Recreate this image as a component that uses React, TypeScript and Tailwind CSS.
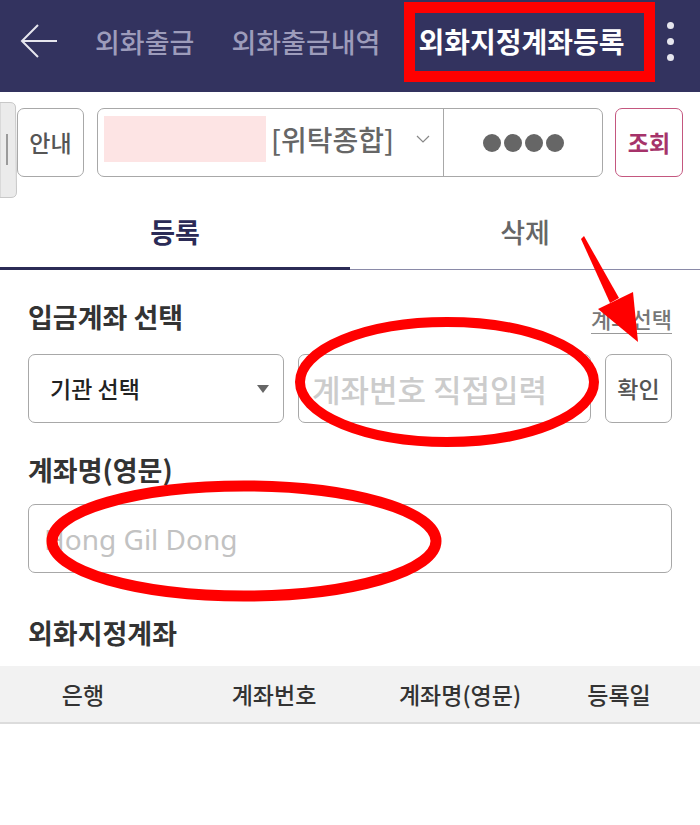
import React from "react";

const KR = { fontFamily: '"Noto Sans CJK KR", "Noto Sans", sans-serif' };

export default function App() {
  return (
    <div className="relative w-[700px] h-[825px] bg-white overflow-hidden" style={KR}>
      {/* Header */}
      <div className="h-[92px] bg-[#33335f] flex items-center pl-[20px] pb-[10px]">
        <svg width="38" height="36" viewBox="0 0 38 36" className="shrink-0">
          <path d="M37 18H2M18 2L2 18L18 34" fill="none" stroke="#e6e6ee" strokeWidth="2" />
        </svg>
        <div className="ml-[37px] text-[27px] font-medium text-[#9d9cbb] leading-none whitespace-nowrap">외화출금</div>
        <div className="ml-[37px] text-[27px] font-medium text-[#9d9cbb] leading-none whitespace-nowrap">외화출금내역</div>
        <div className="ml-[38px] text-[28px] font-bold text-white leading-none whitespace-nowrap">외화지정계좌등록</div>
        <div className="ml-auto mr-[26px] flex flex-col gap-[9px] items-center">
          <div className="w-[7px] h-[7px] rounded-full bg-[#e6e6ee]" />
          <div className="w-[7px] h-[7px] rounded-full bg-[#e6e6ee]" />
          <div className="w-[7px] h-[7px] rounded-full bg-[#e6e6ee]" />
        </div>
      </div>

      {/* Account row */}
      <div className="flex items-stretch h-[69px] mt-[16px] px-[17px] gap-[13px]">
        <div className="w-[67px] border border-[#a8a8a8] rounded-[7px] flex items-center justify-center text-[23px] font-medium text-[#555]">안내</div>
        <div className="w-[506px] border border-[#a8a8a8] rounded-[7px] flex">
          <div className="w-[345px] flex items-start pl-[6px] pt-[7px]">
            <div className="w-[162px] h-[46px] bg-[#fde4e4] shrink-0" />
            <div className="ml-[5px] h-[46px] flex items-center text-[28px] font-medium text-[#666] leading-none whitespace-nowrap">[위탁종합]</div>
            <svg width="14" height="10" viewBox="0 0 14 10" className="ml-[22px] mt-[18px] shrink-0">
              <path d="M1 2L7 8L13 2" fill="none" stroke="#888" strokeWidth="1.2" />
            </svg>
          </div>
          <div className="flex-1 border-l border-[#a8a8a8] flex items-center justify-center gap-[3px]">
            <div className="w-[18px] h-[18px] rounded-full bg-[#666]" />
            <div className="w-[18px] h-[18px] rounded-full bg-[#666]" />
            <div className="w-[18px] h-[18px] rounded-full bg-[#666]" />
            <div className="w-[18px] h-[18px] rounded-full bg-[#666]" />
          </div>
        </div>
        <div className="w-[68px] ml-[-1px] border border-[#c4577f] rounded-[7px] flex items-center justify-center text-[23px] font-bold text-[#a6336a]">조회</div>
      </div>

      {/* Tabs */}
      <div className="flex h-[93px]">
        <div className="w-[350px] flex items-center justify-center pt-[20px] text-[27px] font-bold text-[#2b2b56] border-b-[3px] border-[#2b2b56]">등록</div>
        <div className="flex-1 flex items-center justify-center pt-[20px] text-[27px] font-medium text-[#666] border-b border-[#8a8aa8] pb-[2px]">삭제</div>
      </div>

      {/* 입금계좌 선택 */}
      <div className="px-[28px]">
        <div className="flex items-center justify-between h-[36px] mt-[28px]">
          <div className="text-[27px] font-bold text-[#333] leading-none">입금계좌 선택</div>
          <div className="text-[22px] font-medium text-[#777] leading-none border-b border-[#999] pb-[4px] mt-[8px]">계좌선택</div>
        </div>
        <div className="flex h-[69px] mt-[20px] gap-[14px]">
          <div className="w-[256px] border border-[#a8a8a8] rounded-[7px] flex items-center pl-[21px] pr-[14px]">
            <span className="text-[23px] font-medium text-[#222]">기관 선택</span>
            <svg width="12" height="8" viewBox="0 0 12 8" className="ml-auto">
              <path d="M0 0H12L6 8Z" fill="#666" />
            </svg>
          </div>
          <div className="w-[293px] border border-[#a8a8a8] rounded-[7px] flex items-center pl-[13px] overflow-hidden">
            <span className="text-[31px] font-medium text-[#cccccc] whitespace-nowrap leading-none">계좌번호 직접입력</span>
          </div>
          <div className="w-[67px] border border-[#a8a8a8] rounded-[7px] flex items-center justify-center text-[23px] font-medium text-[#555]">확인</div>
        </div>

        {/* 계좌명(영문) */}
        <div className="h-[36px] flex items-center mt-[28px] text-[27px] font-bold text-[#333] leading-none">계좌명(영문)</div>
        <div className="h-[69px] mt-[17px] border border-[#a8a8a8] rounded-[7px] flex items-center pl-[15px]">
          <span className="text-[28px] text-[#c2c2c2]" style={{ fontFamily: '"Noto Sans", sans-serif' }}>Hong Gil Dong</span>
        </div>

        <div className="h-[36px] flex items-center mt-[41px] text-[27px] font-bold text-[#333] leading-none">외화지정계좌</div>
      </div>

      {/* Table header */}
      <div className="mt-[16px] h-[58px] bg-[#f2f2f2] border-b-2 border-[#dcdcdc] grid grid-cols-[166px_216px_156px_162px] items-center text-[23px] font-medium text-[#333]">
        <div className="text-center">은행</div>
        <div className="text-center">계좌번호</div>
        <div className="text-center">계좌명(영문)</div>
        <div className="text-center">등록일</div>
      </div>

      {/* Left edge handle */}
      <svg className="absolute left-0 top-[102px] pointer-events-none" width="20" height="96" viewBox="0 0 20 96">
        <path d="M0 0.5H10Q15 0.5 15.5 5L16.5 90Q16.5 95.5 11 95.5H0Z" fill="#ebebeb" stroke="#c8c8c8" strokeWidth="1" />
        <line x1="7" y1="32" x2="7" y2="63" stroke="#9a9a9a" strokeWidth="2" />
      </svg>

      {/* Red annotations */}
      <svg className="absolute inset-0 pointer-events-none" width="700" height="825" viewBox="0 0 700 825">
        <rect x="409.5" y="7.5" width="240" height="69" fill="none" stroke="#ff0000" strokeWidth="11" />
        <ellipse cx="447" cy="382" rx="147" ry="60" fill="none" stroke="#ff0000" strokeWidth="10" />
        <ellipse cx="244" cy="541" rx="192" ry="55" fill="none" stroke="#ff0000" strokeWidth="11" />
        <polygon points="581,239 584,236 619,298 610,303" fill="#ff0000" />
        <polygon points="598,309 633,292 638,342" fill="#ff0000" />
      </svg>
    </div>
  );
}
